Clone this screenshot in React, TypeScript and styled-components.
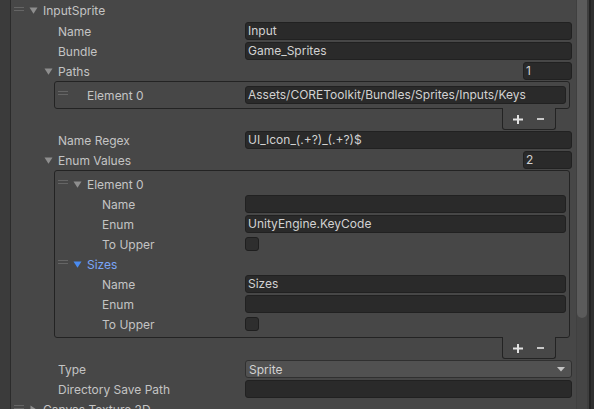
import React from 'react';
import styled, { createGlobalStyle } from 'styled-components';

const Global = createGlobalStyle`
  html, body { margin: 0; padding: 0; background: #474747; overflow: hidden; }
  body { font-family: Inter, "Noto Sans", sans-serif; font-size: 12px; color: #c4c4c4; }
  * { box-sizing: border-box; }
`;

const Window = styled.div`
  display: flex;
  width: 594px;
  height: 409px;
  overflow: hidden;
  background: #474747;
`;

const Gutter = styled.div`
  flex: none;
  width: 11px;
  background: #3b3b3b;
  border-right: 1px solid #2b2b2b;
`;

const Content = styled.div`
  flex: 1;
  min-width: 0;
  padding: 0 4px 0 0;
  display: flex;
  flex-direction: column;
  overflow: hidden;
`;

const Scrollbar = styled.div`
  flex: none;
  width: 18px;
  display: flex;
`;

const Track = styled.div`
  flex: none;
  width: 11px;
  border-left: 1px solid #404040;
  background: #454545;
`;

const Thumb = styled.div`
  height: 318px;
  background: #5b5b5b;
  border-radius: 0 0 5px 5px;
`;

const EdgeStrip = styled.div<{ $w: number; $c: string }>`
  flex: none;
  width: ${p => p.$w}px;
  background: ${p => p.$c};
`;

const Row = styled.div<{ $h?: number; $pad?: number }>`
  flex: none;
  display: flex;
  align-items: center;
  height: ${p => p.$h ?? 20}px;
  padding-left: ${p => p.$pad ?? 0}px;
  white-space: nowrap;
`;

const Label = styled.div<{ $w: number; $indent: number }>`
  flex: none;
  width: ${p => p.$w}px;
  padding-left: ${p => p.$indent}px;
  color: #c4c4c4;
  white-space: nowrap;
`;

const Field = styled.div<{ $w?: number }>`
  flex: ${p => (p.$w ? 'none' : '1')};
  width: ${p => (p.$w ? `${p.$w}px` : 'auto')};
  margin-left: ${p => (p.$w ? 'auto' : '0')};
  height: 18px;
  background: #2a2a2a;
  border: 1px solid #212121;
  border-radius: 3px;
  padding: 0 2px;
  line-height: 16px;
  color: #d2d2d2;
  white-space: nowrap;
  overflow: hidden;
`;

const Dropdown = styled.div`
  flex: 1;
  height: 18px;
  background: #515151;
  border: 1px solid #303030;
  border-radius: 3px;
  padding: 0 6px 0 3px;
  display: flex;
  align-items: center;
  justify-content: space-between;
  color: #d2d2d2;
`;

const Checkbox = styled.div`
  width: 14px;
  height: 14px;
  background: #2e2e2e;
  border: 1px solid #1f1f1f;
  border-radius: 3px;
`;

const Handle = styled.div`
  flex: none;
  width: 10px;
  height: 4px;
  margin-bottom: 4px;
  border-top: 1px solid #656565;
  border-bottom: 1px solid #656565;
`;

const Title = styled.span<{ $active?: boolean }>`
  color: ${p => (p.$active ? '#7aa6f7' : '#c4c4c4')};
`;

const Gap = styled.div<{ $w: number }>`
  flex: none;
  width: ${p => p.$w}px;
`;

const ListBox = styled.div`
  flex: none;
  margin: 0 2px 0 43px;
  border: 1px solid #232323;
  border-radius: 3px;
  padding: 3px 3px 3px 0;
  display: flex;
  flex-direction: column;
`;

const ListFooter = styled.div`
  flex: none;
  align-self: flex-end;
  margin: -1px 16px 0 0;
  width: 54px;
  height: 22px;
  border: 1px solid #232323;
  border-top: none;
  border-radius: 0 0 3px 3px;
  background: #474747;
  display: flex;
  align-items: center;
  padding: 2px 0 0 10px;
  gap: 14px;
`;

const ArrowDown = ({ color = '#8e8e8e' }: { color?: string }) => (
  <svg width="9" height="7" viewBox="0 0 9 7" style={{ flex: 'none' }}>
    <polygon points="0.5,0.5 8.5,0.5 4.5,6.8" fill={color} />
  </svg>
);

const ArrowRight = () => (
  <svg width="9" height="9" viewBox="0 0 9 9" style={{ flex: 'none' }}>
    <polygon points="1.5,0.5 7.5,4.5 1.5,8.5" fill="#8e8e8e" />
  </svg>
);

const Plus = () => (
  <svg width="10" height="9" viewBox="0 0 10 9">
    <rect x="0" y="3.5" width="10" height="2" fill="#e2e2e2" />
    <rect x="4" y="0" width="2" height="9" fill="#e2e2e2" />
  </svg>
);

const Minus = () => (
  <svg width="7" height="9" viewBox="0 0 7 9">
    <rect x="0" y="3" width="7" height="2" fill="#c8c8c8" />
  </svg>
);

const DropArrow = () => (
  <svg width="8" height="5" viewBox="0 0 8 5">
    <polygon points="0,0 8,0 4,4.5" fill="#c4c4c4" />
  </svg>
);

const TOP_W = 234;
const TOP_IND = 47;
const BOX_W = 190;
const BOX_IND = 47;

const PropRow = ({ label, children, inBox }: { label: string; children: React.ReactNode; inBox?: boolean }) => (
  <Row>
    <Label $w={inBox ? BOX_W : TOP_W} $indent={inBox ? BOX_IND : TOP_IND}>{label}</Label>
    {children}
  </Row>
);

export default function App() {
  return (
    <Window>
      <Global />
      <Gutter />
      <Content>
        <Row $h={21} $pad={3}>
          <Handle />
          <Gap $w={5} />
          <ArrowDown />
          <Gap $w={5} />
          <Title>InputSprite</Title>
        </Row>
        <PropRow label="Name"><Field>Input</Field></PropRow>
        <PropRow label="Bundle"><Field>Game_Sprites</Field></PropRow>
        <Row $pad={33}>
          <ArrowDown />
          <Gap $w={5} />
          <Title>Paths</Title>
          <Field $w={49}>1</Field>
        </Row>
        <ListBox>
          <Row $pad={3}>
            <Handle />
            <Label $w={BOX_W - 13} $indent={19}>Element 0</Label>
            <Field>Assets/COREToolkit/Bundles/Sprites/Inputs/Keys</Field>
          </Row>
        </ListBox>
        <ListFooter><Plus /><Minus /></ListFooter>
        <PropRow label="Name Regex"><Field>UI_Icon_(.+?)_(.+?)$</Field></PropRow>
        <Row $pad={33}>
          <ArrowDown />
          <Gap $w={5} />
          <Title>Enum Values</Title>
          <Field $w={49}>2</Field>
        </Row>
        <ListBox>
          <Row $pad={3}>
            <Handle />
            <Gap $w={5} />
            <ArrowDown />
            <Gap $w={5} />
            <Title>Element 0</Title>
          </Row>
          <PropRow inBox label="Name"><Field /></PropRow>
          <PropRow inBox label="Enum"><Field>UnityEngine.KeyCode</Field></PropRow>
          <PropRow inBox label="To Upper"><Checkbox /></PropRow>
          <Row $pad={3}>
            <Handle />
            <Gap $w={5} />
            <ArrowDown color="#4a8bf0" />
            <Gap $w={5} />
            <Title $active>Sizes</Title>
          </Row>
          <PropRow inBox label="Name"><Field>Sizes</Field></PropRow>
          <PropRow inBox label="Enum"><Field /></PropRow>
          <PropRow inBox label="To Upper"><Checkbox /></PropRow>
        </ListBox>
        <ListFooter><Plus /><Minus /></ListFooter>
        <PropRow label="Type">
          <Dropdown><span>Sprite</span><DropArrow /></Dropdown>
        </PropRow>
        <PropRow label="Directory Save Path"><Field /></PropRow>
        <Row $pad={3}>
          <Handle />
          <Gap $w={5} />
          <ArrowRight />
          <Gap $w={5} />
          <Title>Canvas Texture 2D</Title>
        </Row>
      </Content>
      <Scrollbar>
        <Track><Thumb /></Track>
        <EdgeStrip $w={2} $c="#3e3e3e" />
        <EdgeStrip $w={2} $c="#232323" />
        <EdgeStrip $w={3} $c="#2f2f2f" />
      </Scrollbar>
    </Window>
  );
}
